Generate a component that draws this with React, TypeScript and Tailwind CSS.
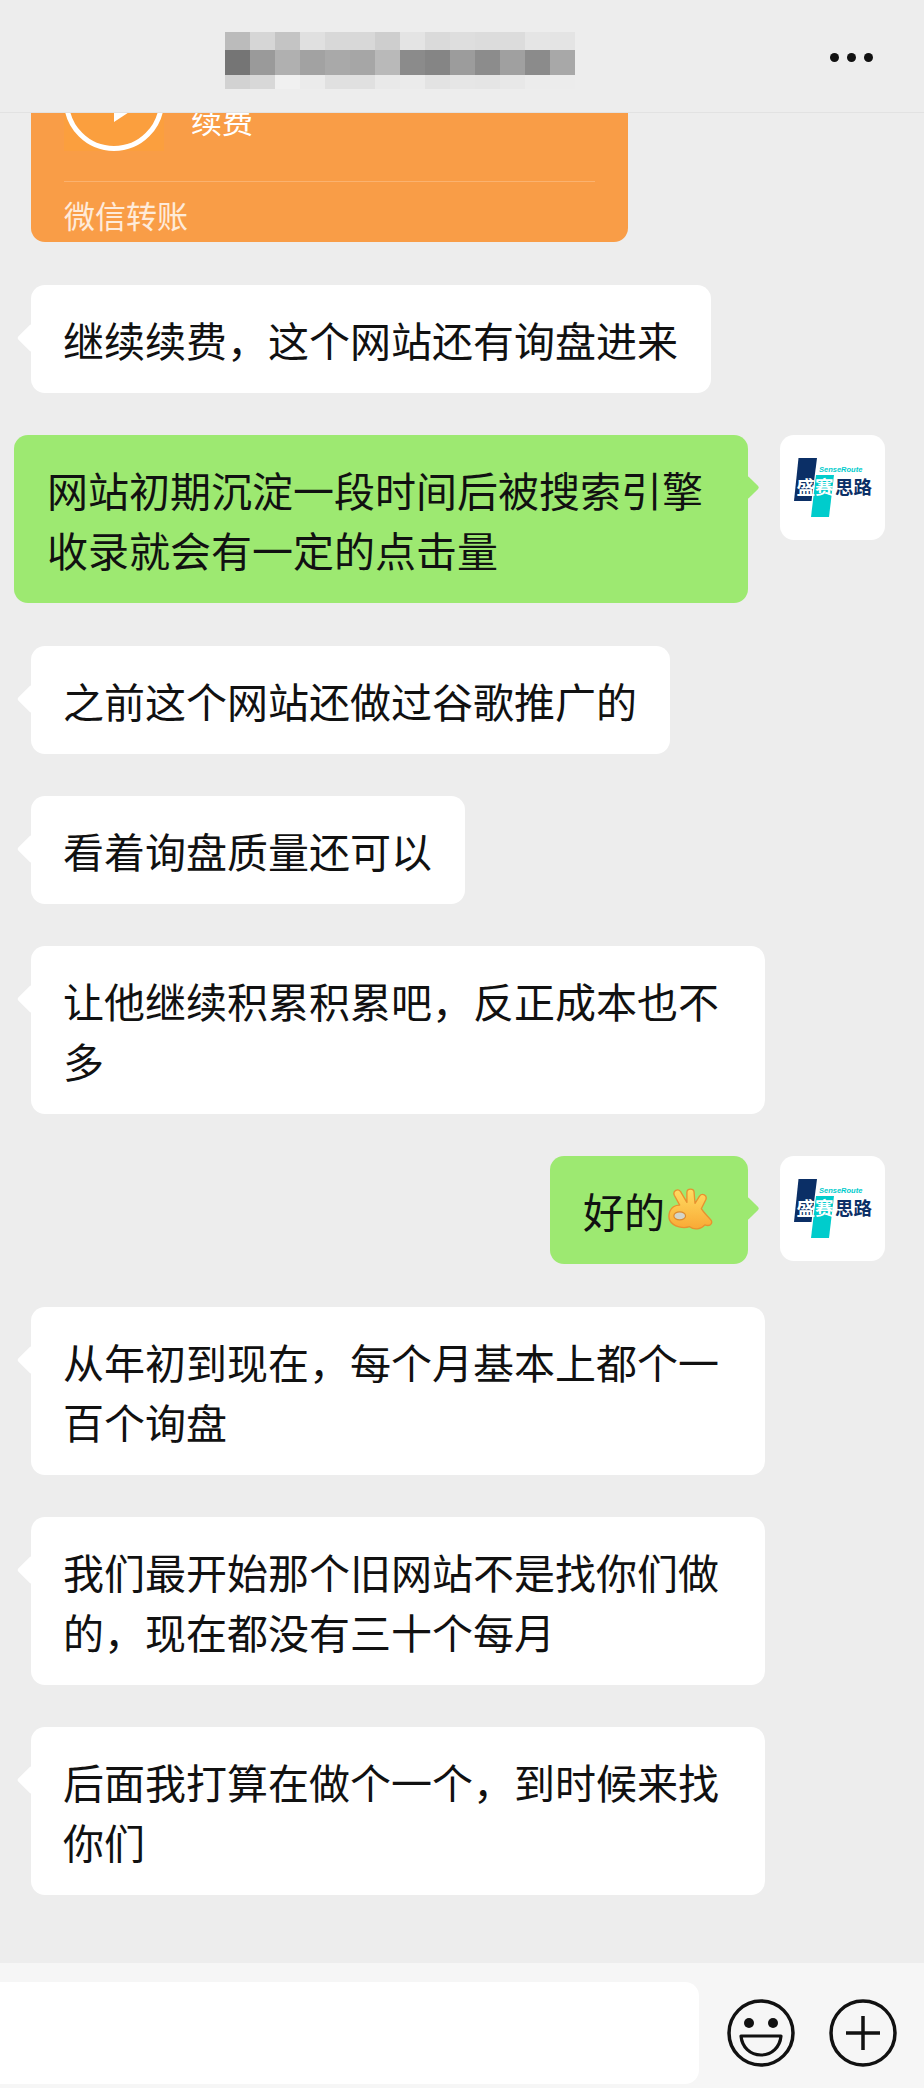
import React from "react";

const CJK = "font-['Noto_Sans_CJK_SC','Liberation_Sans',sans-serif]";

// mosaic over the contact name in the header
const blurRows = [
  { h: "h-[18px]", cells: ["bg-[#bbbbbb]", "bg-[#d6d6d6]", "bg-[#c4c4c4]", "bg-[#e0e0e0]", "bg-[#d8d8d8]", "bg-[#d8d8d8]", "bg-[#cecece]", "bg-[#e4e4e4]", "bg-[#dadada]", "bg-[#dedede]", "bg-[#dcdcdc]", "bg-[#dcdcdc]", "bg-[#e5e5e5]", "bg-[#e4e4e4]"] },
  { h: "h-[25px]", cells: ["bg-[#757575]", "bg-[#9a9a9a]", "bg-[#b0b0b0]", "bg-[#a2a2a2]", "bg-[#a9a9a9]", "bg-[#a6a6a6]", "bg-[#b9b9b9]", "bg-[#8b8b8b]", "bg-[#858585]", "bg-[#9c9c9c]", "bg-[#8c8c8c]", "bg-[#a0a0a0]", "bg-[#8b8b8b]", "bg-[#a8a8a8]"] },
  { h: "h-[14px]", cells: ["bg-[#d2d2d2]", "bg-[#d8d8d8]", "bg-[#f0f0f0]", "bg-[#ebebeb]", "bg-[#e0e0e0]", "bg-[#e0e0e0]", "bg-[#e9e9e9]", "bg-[#ebebeb]", "bg-[#e3e3e3]", "bg-[#e6e6e6]", "bg-[#e5e5e5]", "bg-[#e8e8e8]", "bg-[#ececec]", "bg-[#ececec]"] },
];

function Avatar() {
  return (
    <div className="w-[105px] h-[105px] shrink-0 bg-white rounded-[14px]">
      <svg viewBox="0 0 105 105" className="w-full h-full">
        <polygon points="18.5,23 37,23 31.5,66 14,66" fill="#0b2f66" />
        <polygon points="36,40 54,40 49,82 31,82" fill="#00cccc" />
        <text x="39" y="37" fontSize="7.5" fontWeight="700" fontStyle="italic" fill="#00cccc" fontFamily="Liberation Sans, sans-serif">SenseRoute</text>
        <g fontSize="18.5" fontWeight="700" fontFamily="Noto Sans CJK SC, sans-serif">
          <text x="16.5" y="59" fill="#ffffff">盛</text>
          <text x="35" y="59" fill="#ffffff">赛</text>
          <text x="55" y="59" fill="#0b2f66">思</text>
          <text x="73.5" y="59" fill="#0b2f66">路</text>
        </g>
      </svg>
    </div>
  );
}

function Left({ text }: { text: string }) {
  return (
    <div className="flex pl-[31px]">
      <div className="relative max-w-[734px] bg-white rounded-[14px] pl-[32px] pr-[33px] py-6">
        <span className="absolute left-[-10px] top-[43px] w-5 h-5 rotate-45 bg-white rounded-[2px]" />
        <p className="relative text-[41px] leading-[60px] text-[#111111]">{text}</p>
      </div>
    </div>
  );
}

function Right({ children }: { children: React.ReactNode }) {
  return (
    <div className="flex justify-end items-start gap-[32px] pr-[39px]">
      <div className="relative max-w-[734px] bg-[#9de971] rounded-[14px] pl-[33px] pr-[35px] py-6">
        <span className="absolute right-[-8px] top-[44px] w-[17px] h-[17px] rotate-45 bg-[#9de971] rounded-[2px]" />
        <div className="relative text-[41px] leading-[60px] text-[#111111]">{children}</div>
      </div>
      <Avatar />
    </div>
  );
}

function OkHand() {
  return (
    <svg viewBox="7 6 50 50" className="w-[45px] h-[45px] ml-[3px] shrink-0">
      <defs>
        <linearGradient id="hand" x1="0" y1="0" x2="0" y2="1">
          <stop offset="0" stopColor="#ffdc62" />
          <stop offset="1" stopColor="#f9a935" />
        </linearGradient>
      </defs>
      <path
        d="M9 32 C11 27 15 25 20 25 L14 14 C12 9 18 6 21 10 L28 22 L28 11 C28 6 36 6 36 11 L37 23 L42 15 C45 11 51 14 49 19 L44 29 C47 34 52 38 55 42 C57 46 53 49 48 47 C44 52 36 53 31 49 C25 51 13 50 9 42 C7 38 8 35 9 32 Z"
        fill="url(#hand)"
        stroke="#e8912f"
        strokeWidth="1.5"
        strokeLinejoin="round"
      />
      <ellipse cx="20" cy="37" rx="6.5" ry="4.5" fill="#d3d4c9" stroke="#dc8a2d" strokeWidth="1.3" />
    </svg>
  );
}

function SmileIcon() {
  return (
    <svg viewBox="0 0 68 68" className="w-[68px] h-[68px]">
      <circle cx="34" cy="34" r="32" fill="none" stroke="#111111" strokeWidth="3.5" />
      <circle cx="22" cy="24" r="5" fill="#111111" />
      <circle cx="46" cy="24" r="5" fill="#111111" />
      <path d="M14 37 H54 C53 48 45 56 34 56 C23 56 15 48 14 37 Z" fill="none" stroke="#111111" strokeWidth="3.2" strokeLinejoin="round" />
    </svg>
  );
}

function PlusIcon() {
  return (
    <svg viewBox="0 0 68 68" className="w-[68px] h-[68px]">
      <circle cx="34" cy="34" r="32" fill="none" stroke="#111111" strokeWidth="3.5" />
      <path d="M17 34 H51 M34 17 V51" stroke="#111111" strokeWidth="3.5" />
    </svg>
  );
}

export default function App() {
  return (
    <div className={`h-[2088px] flex flex-col overflow-hidden bg-[#ededed] ${CJK}`}>
      {/* Top bar */}
      <div className="relative z-10 shrink-0 h-[113px] bg-[#ededed] border-b border-[#e2e2e2] flex items-start pt-[32px] pl-[225px] pr-[51px]">
        <div className="flex flex-col w-[350px]">
          {blurRows.map((row) => (
            <div key={row.h} className={`flex ${row.h}`}>
              {row.cells.map((c, i) => (
                <div key={i} className={`w-[25px] ${c}`} />
              ))}
            </div>
          ))}
        </div>
        <div className="ml-auto flex gap-2 mt-[21px]">
          <span className="w-[9px] h-[9px] rounded-full bg-[#111111]" />
          <span className="w-[9px] h-[9px] rounded-full bg-[#111111]" />
          <span className="w-[9px] h-[9px] rounded-full bg-[#111111]" />
        </div>
      </div>

      {/* Messages */}
      <div className="flex-1 overflow-hidden flex flex-col gap-[42.3px]">
        <div className="ml-[31px] mb-[0.7px] w-[597px] -mt-[62px] bg-[#f99d47] rounded-b-[14px] px-[33px] pb-[12px]">
          <div className="flex gap-[27px] border-b border-[#fbb26f]">
            <div className="mb-[30px] w-[100px] h-[100px] bg-[#fb9f3e]">
              <svg viewBox="0 0 100 100" className="w-full h-full">
                <circle cx="50" cy="50" r="47.5" fill="none" stroke="#ffffff" strokeWidth="5" />
                <polygon points="50,28 50,71 82,50" fill="#ffffff" />
              </svg>
            </div>
            <p className="mt-[53px] text-[31px] leading-[31px] text-white">续费</p>
          </div>
          <p className="mt-[17px] text-[31px] leading-[31px] text-white/80">微信转账</p>
        </div>

        <Left text="继续续费，这个网站还有询盘进来" />
        <Right>网站初期沉淀一段时间后被搜索引擎收录就会有一定的点击量</Right>
        <Left text="之前这个网站还做过谷歌推广的" />
        <Left text="看着询盘质量还可以" />
        <Left text="让他继续积累积累吧，反正成本也不多" />
        <Right>
          <span className="flex items-center">
            好的
            <OkHand />
          </span>
        </Right>
        <Left text="从年初到现在，每个月基本上都个一百个询盘" />
        <Left text="我们最开始那个旧网站不是找你们做的，现在都没有三十个每月" />
        <Left text="后面我打算在做个一个，到时候来找你们" />
      </div>

      {/* Input bar */}
      <div className="shrink-0 h-[125px] bg-[#f6f6f6] pt-[19px] flex items-start">
        <div className="w-[699px] h-[102px] bg-white rounded-r-[14px]" />
        <div className="ml-[28px] h-[102px] flex items-center gap-[34px]">
          <SmileIcon />
          <PlusIcon />
        </div>
      </div>
    </div>
  );
}
